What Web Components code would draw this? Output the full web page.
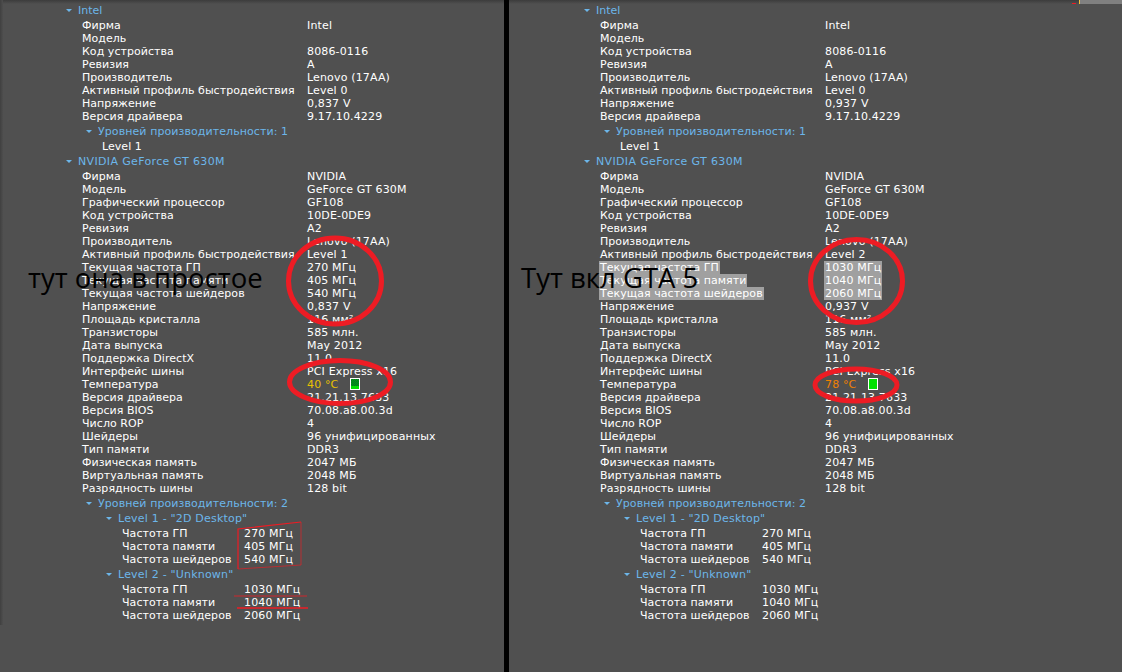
<!DOCTYPE html>
<html><head><meta charset="utf-8"><style>
html,body{margin:0;padding:0;background:#000;overflow:hidden}
body{width:1122px;height:672px;display:flex;gap:5px}
#a{width:504px;flex:none;--strip:3px}
#b{flex:1;--shift:9px}
</style></head><body>
<template id="t-panel"><style>
:host{display:block;position:relative;height:672px;background:#505050;box-sizing:border-box;padding:3px 0 0 var(--shift,0px);overflow:hidden}
.shade{position:absolute;left:0;right:0;top:0;height:4px;background:linear-gradient(#3c3c3c,#505050)}
.edge{position:absolute;left:0;top:0;width:var(--strip,0);height:625px;background:linear-gradient(90deg,#404040,#4e4e4e)}
.cap{position:absolute;font:27.5px/30px "Open Sans","Liberation Sans",sans-serif;color:#000;white-space:nowrap;left:var(--cx);top:263px}
</style><div class="shade"></div><div class="edge"></div><slot></slot><div class="cap"><slot name="caption"></slot></div><slot name="ink"></slot></template>
<template id="t-group"><style>:host{display:block;padding:1px 0}</style><slot></slot></template>
<template id="t-head"><style>
:host{display:flex;align-items:center;height:15px;color:#6cb6ea;font:11px/15px "DejaVu Sans",sans-serif;padding-left:var(--in,66px);white-space:nowrap;letter-spacing:var(--ls,0)}
i{width:0;height:0;border:3px solid transparent;border-top-color:#6cb6ea;border-bottom:0;margin-right:6px}
</style><i></i><slot></slot></template>
<template id="t-row"><style>
:host{display:flex;height:13px;font:11px/13px "DejaVu Sans",sans-serif;padding-left:var(--in,82px);white-space:nowrap;color:#fff}
.k{width:var(--kw,225px);flex:none;letter-spacing:.05px}
.v{letter-spacing:.15px}
.sel{display:inline-block;height:13px;background:#a0a0a0;box-shadow:-1px 0 #a0a0a0,1px 0 #a0a0a0}
</style><div class="k"><span id="k"></span></div><div class="v"><span id="v"><slot></slot></span></div></template>
<template id="t-meter"><style>
:host{display:inline-block;width:10px;height:12px;box-sizing:border-box;border:1px solid #fff;background:#00e000;margin-left:12px;vertical-align:-2px}
div{height:var(--dots,0px);background:repeating-conic-gradient(#063 0 25%,#0a0 0 50%) 0 0/2px 2px}
</style><div></div></template>
<gpu-panel id="a"></gpu-panel>
<gpu-panel id="b"></gpu-panel>
<script>
const def=(n,id,setup)=>customElements.define(n,class extends HTMLElement{constructor(){super();this.attachShadow({mode:'open'}).appendChild(document.getElementById(id).content.cloneNode(true));}connectedCallback(){setup&&setup(this)}});
def('gpu-panel','t-panel');
def('gpu-group','t-group');
def('gpu-head','t-head');
def('gpu-meter','t-meter');
def('gpu-row','t-row',e=>{const s=e.shadowRoot;s.getElementById('k').textContent=e.getAttribute('k')||'';if(e.hasAttribute('sel')){s.getElementById('k').className='sel';s.getElementById('v').className='sel'}});
function build(o){
 const H=(t,i,ls=0)=>`<gpu-head style="--in:${i}px;--ls:${ls}px">${t}</gpu-head>`;
 const rows=(l,extra='')=>l.map(a=>`<gpu-row k="${a[0]}" ${extra}>${a[1]}</gpu-row>`).join('');
 const G=h=>`<gpu-group>${h}</gpu-group>`;
 const sub=l=>G(l.map(a=>`<gpu-row k="${a[0]}" style="--in:122px;--kw:122px">${a[1]}</gpu-row>`).join(''));
 return H('Intel',66)+G(rows([['Фирма','Intel'],['Модель',''],['Код устройства','8086-0116'],['Ревизия','A'],['Производитель','Lenovo (17AA)'],['Активный профиль быстродействия','Level 0'],['Напряжение',o.v0],['Версия драйвера','9.17.10.4229']]))
 +H('Уровней производительности: 1',86,.08)+G(`<gpu-row k="Level 1" style="--in:102px"></gpu-row>`)
 +H('NVIDIA GeForce GT 630M',66,.35)
 +G(rows([['Фирма','NVIDIA'],['Модель','GeForce GT 630M'],['Графический процессор','GF108'],['Код устройства','10DE-0DE9'],['Ревизия','A2'],['Производитель','Lenovo (17AA)'],['Активный профиль быстродействия',o.lvl]])
 +rows([['Текущая частота ГП',o.f[0]],['Текущая частота памяти',o.f[1]],['Текущая частота шейдеров',o.f[2]]],o.sel)
 +rows([['Напряжение',o.v],['Площадь кристалла','116 мм²'],['Транзисторы','585 млн.'],['Дата выпуска','May 2012'],['Поддержка DirectX','11.0'],['Интерфейс шины','PCI Express x16'],['Температура',o.t],['Версия драйвера','21.21.13.7633'],['Версия BIOS','70.08.a8.00.3d'],['Число ROP','4'],['Шейдеры','96 унифицированных'],['Тип памяти','DDR3'],['Физическая память','2047 МБ'],['Виртуальная память','2048 МБ'],['Разрядность шины','128 bit']]))
 +H('Уровней производительности: 2',86,.08)
 +H('Level 1 - "2D Desktop"',106,.2)
 +sub([['Частота ГП','270 МГц'],['Частота памяти','405 МГц'],['Частота шейдеров','540 МГц']])
 +H('Level 2 - "Unknown"',106,.2)
 +sub([['Частота ГП','1030 МГц'],['Частота памяти','1040 МГц'],['Частота шейдеров','2060 МГц']])
 +o.extra;
}
const RED='#ed1c24';
const SV='position:absolute;left:0;top:0';
const inkA=`<svg slot="ink" width="504" height="672" fill="none" stroke="${RED}" style="${SV}">
<ellipse cx="335" cy="281" rx="46.5" ry="43" stroke-width="5"/>
<ellipse cx="340" cy="382" rx="50.5" ry="21.5" stroke-width="5"/>
<path d="M238 569V529L301 522" stroke-width="1.2"/>
<path d="M301 522V565L238 569" stroke-width="1" opacity=".65"/>
<path d="M234 596H307" stroke-width="1" opacity=".8"/>
<path d="M237 608H308" stroke-width="1.5"/></svg>`;
const inkB=`<svg slot="ink" width="613" height="672" style="${SV}">
<g fill="none" stroke="${RED}" stroke-width="5"><ellipse cx="347.5" cy="281" rx="46" ry="41.5"/>
<ellipse cx="347" cy="385" rx="41" ry="16"/></g>
<rect x="570" y="0" width="43" height="4" fill="#808080"/><rect x="570" y="0" width="1" height="4" fill="#f0c040"/><rect x="563" y="3" width="4" height="1" fill="${RED}"/></svg>`;
const pa=document.getElementById('a'),pb=document.getElementById('b');
pa.innerHTML=build({v0:'0,837 V',v:'0,837 V',lvl:'Level 1',f:['270 МГц','405 МГц','540 МГц'],sel:'',t:'<span style="color:#e8c000">40 °C</span><gpu-meter style="--dots:7px"></gpu-meter>',extra:`<span slot="caption">тут она в простое</span>${inkA}`});
pb.innerHTML=build({v0:'0,937 V',v:'0,937 V',lvl:'Level 2',f:['1030 МГц','1040 МГц','2060 МГц'],sel:'sel',t:'<span style="color:#f08000">78 °C</span><gpu-meter></gpu-meter>',extra:`<span slot="caption">Тут вкл GTA 5</span>${inkB}`});
pa.style.setProperty('--cx','28px');
pb.style.setProperty('--cx','12px');
</script>
</body></html>
